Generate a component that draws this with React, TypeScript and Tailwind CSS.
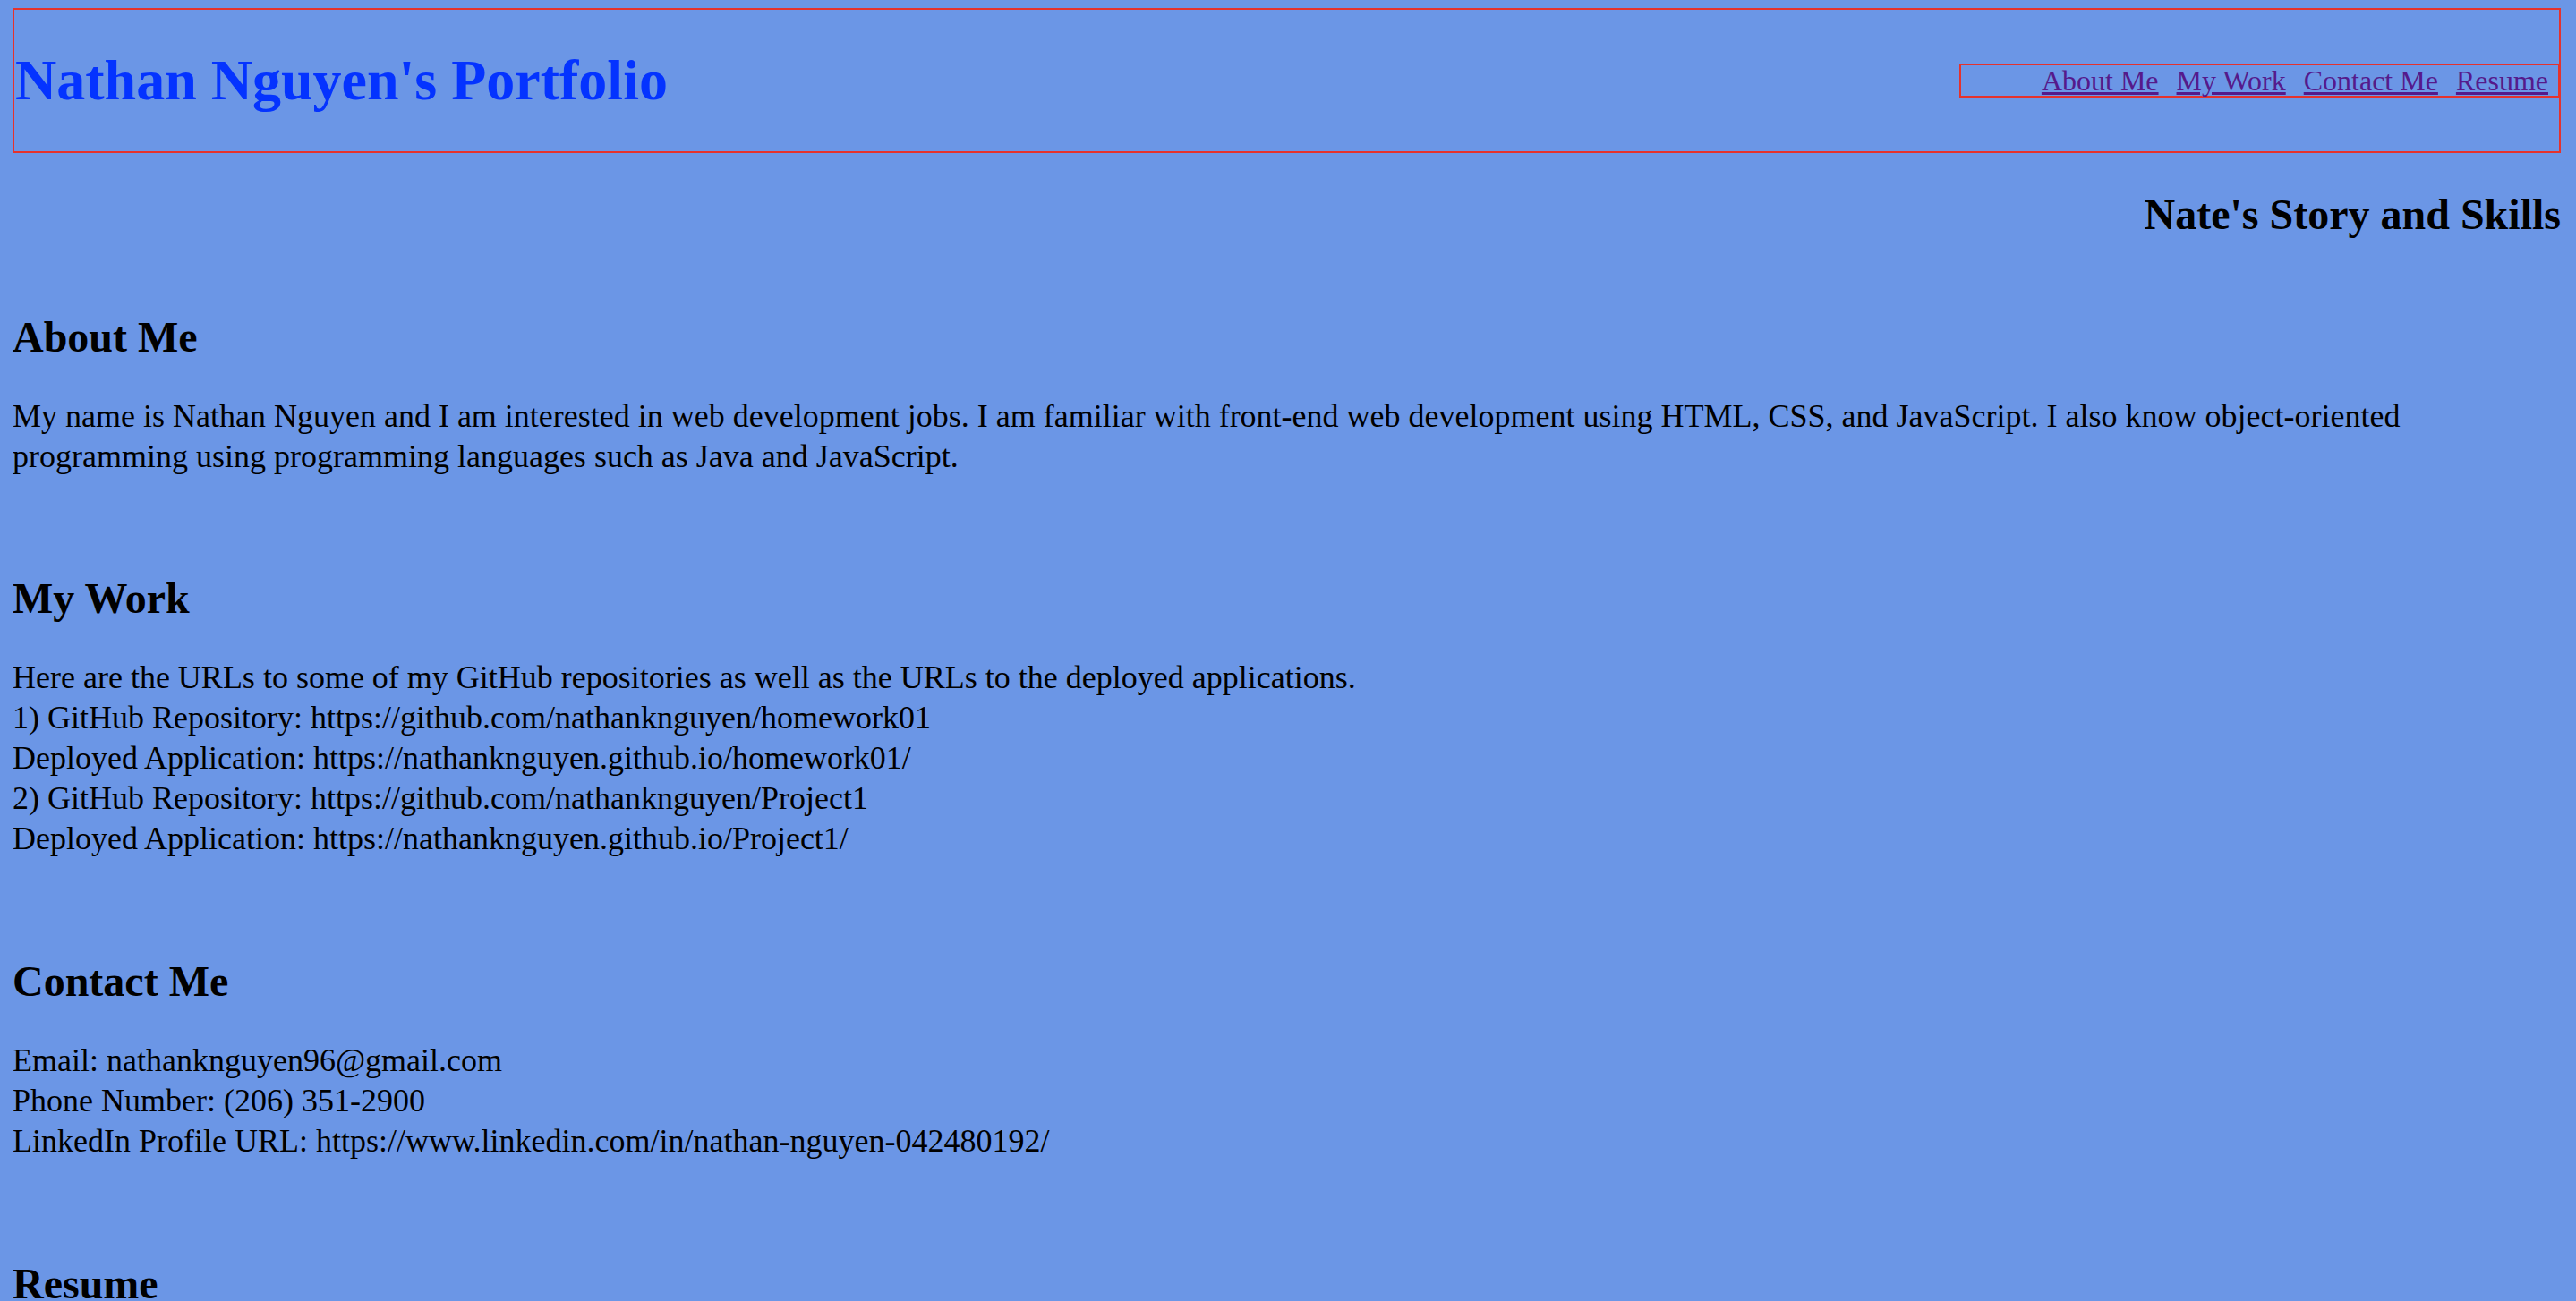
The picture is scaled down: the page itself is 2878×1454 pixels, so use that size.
export default function App() {
  const serif = { fontFamily: '"Liberation Serif", "Times New Roman", serif' };

  return (
    <div className="min-h-screen bg-[#6b96e6] pl-[14px] pr-[17px] pt-[9px] text-black" style={serif}>
      {/* encabezado */}
      <header className="flex items-center justify-between border-2 border-[#e5322d] h-[162px] pl-[1px]">
        <h1 className="text-[64px] leading-[72px] font-bold text-[#0433ff]">Nathan Nguyen's Portfolio</h1>
        <nav className="flex justify-end gap-[20px] w-[671px] border-2 border-[#e5322d] pr-[11px] text-[32px] leading-[34px] mr-[-1px]">
          <a href="#about" className="underline text-[#551a8b]">About Me</a>
          <a href="#work" className="underline text-[#551a8b]">My Work</a>
          <a href="#contact" className="underline text-[#551a8b]">Contact Me</a>
          <a href="#resume" className="underline text-[#551a8b]">Resume</a>
        </nav>
      </header>

      <h2 className="mt-[41px] text-right text-[48px] leading-[56px] font-bold">Nate's Story and Skills</h2>

      <section id="about" className="mt-[81px]">
        <h2 className="text-[48px] leading-[56px] font-bold">About Me</h2>
        <p className="mt-[38px] text-[36px] leading-[45px]">
          My name is Nathan Nguyen and I am interested in web development jobs. I am familiar with front-end web development using HTML, CSS, and JavaScript. I also know object-oriented programming using programming languages such as Java and JavaScript.
        </p>
      </section>

      <section id="work" className="mt-[108px]">
        <h2 className="text-[48px] leading-[56px] font-bold">My Work</h2>
        <p className="mt-[38px] text-[36px] leading-[45px]">
          Here are the URLs to some of my GitHub repositories as well as the URLs to the deployed applications.
          <br />1) GitHub Repository: https://github.com/nathanknguyen/homework01
          <br />Deployed Application: https://nathanknguyen.github.io/homework01/
          <br />2) GitHub Repository: https://github.com/nathanknguyen/Project1
          <br />Deployed Application: https://nathanknguyen.github.io/Project1/
        </p>
      </section>

      <section id="contact" className="mt-[109px]">
        <h2 className="text-[48px] leading-[56px] font-bold">Contact Me</h2>
        <p className="mt-[38px] text-[36px] leading-[45px]">
          Email: nathanknguyen96@gmail.com
          <br />Phone Number: (206) 351-2900
          <br />LinkedIn Profile URL: https://www.linkedin.com/in/nathan-nguyen-042480192/
        </p>
      </section>

      <section id="resume" className="mt-[109px] pb-[60px]">
        <h2 className="text-[48px] leading-[56px] font-bold">Resume</h2>
      </section>
    </div>
  );
}
